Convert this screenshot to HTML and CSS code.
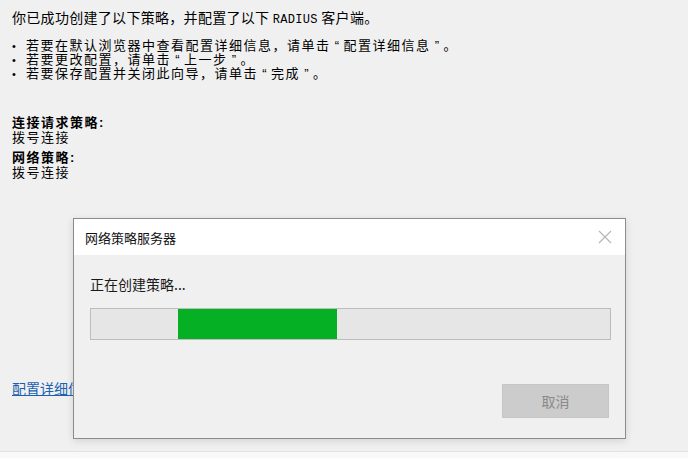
FILE: index.html
```html
<!DOCTYPE html>
<html lang="zh-CN">
<head>
  <meta charset="UTF-8">
  <title>新建 RADIUS 客户端和策略</title>
  <link rel="stylesheet" href="styles.css">
</head>
<body>
  <div class="page">
    <p class="intro">你已成功创建了以下策略，并配置了以下 <span class="mono">RADIUS</span> 客户端。</p>
    <ul class="tips">
      <li>若要在默认浏览器中查看配置详细信息，请单击<span class="q">“</span>配置详细信息<span class="q">”</span>。</li>
      <li>若要更改配置，请单击<span class="q">“</span>上一步<span class="q">”</span>。</li>
      <li>若要保存配置并关闭此向导，请单击<span class="q">“</span>完成<span class="q">”</span>。</li>
    </ul>

    <div class="policy">
      <div class="policy-label">连接请求策略:</div>
      <div class="policy-value">拨号连接</div>
    </div>
    <div class="policy">
      <div class="policy-label">网络策略:</div>
      <div class="policy-value">拨号连接</div>
    </div>

    <a class="details-link" href="#">配置详细信息</a>
  </div>
  <div class="footer"></div>

  <div class="dialog">
    <div class="dialog-title">
      <span>网络策略服务器</span>
      <svg class="close" width="14" height="14" viewBox="0 0 14 14">
        <path d="M1 1 L13 13 M13 1 L1 13" stroke="#b4b4b4" stroke-width="1.1" fill="none"/>
      </svg>
    </div>
    <div class="dialog-body">
      <div class="status">正在创建策略...</div>
      <div class="progress">
        <div class="progress-chunk"></div>
      </div>
      <div class="actions">
        <button class="btn-cancel" disabled>取消</button>
      </div>
    </div>
  </div>
</body>
</html>
```

FILE: styles.css
```css
body {
  margin: 0;
  font-family: "Noto Sans CJK SC", "Liberation Sans", sans-serif;
  background-color: #f0f0f0;
  color: #000000;
  position: relative;
  height: 458px;
  overflow: hidden;
}

.page {
  height: 443px;
  padding: 8px 12px 0 12px;
  font-size: 14px;
}

.intro {
  margin: 0;
  line-height: 18px;
  letter-spacing: 0.3px;
}

.mono {
  font-family: "Liberation Mono", monospace;
  font-size: 12px;
}

/* tightly packed lines, like the wizard's bitmap font */
.tips,
.policy {
  font-family: "Liberation Sans", "Noto Sans CJK SC", sans-serif;
  font-size: 13px;
  letter-spacing: 1.5px;
}

.tips {
  margin: 10px 0 0 0;
  padding: 0;
  list-style: none;
  line-height: 14px;
}

.tips li::before {
  content: "•";
  display: inline-block;
  width: 14px;
  font-size: 11px;
  text-align: left;
}

.q {
  display: inline-block;
  width: 13px;
  text-align: center;
  letter-spacing: 0;
}

.policy {
  line-height: 15px;
  margin-top: 5px;
}

.tips + .policy {
  margin-top: 34px;
}

.policy-label {
  font-weight: bold;
}

.details-link {
  display: inline-block;
  margin-top: 199px;
  color: #1a62b0;
  text-decoration: underline;
  line-height: 18px;
}

.footer {
  height: 7px;
  border-top: 1px solid #e2e2e2;
  background-color: #f9f9f9;
}

/* modal progress dialog over the wizard page */
.dialog {
  position: absolute;
  left: 73px;
  top: 218px;
  width: 551px;
  height: 219px;
  border: 1px solid #8c8c8c;
  background-color: #f0f0f0;
  box-shadow: 0 2px 8px rgba(0, 0, 0, 0.12);
  display: flex;
  flex-direction: column;
}

.dialog-title {
  height: 36px;
  background-color: #ffffff;
  display: flex;
  align-items: center;
  justify-content: space-between;
  padding: 0 13px 0 11px;
  font-size: 13px;
  color: #111111;
}

.dialog-body {
  flex: 1;
  padding: 20px 14px 0 16px;
}

.status {
  font-size: 14px;
  line-height: 18px;
  color: #1a1a1a;
}

.progress {
  margin-top: 15px;
  height: 30px;
  border: 1px solid #bcbcbc;
  background-color: #e6e6e6;
  display: flex;
}

.progress-chunk {
  margin-left: 87px;
  width: 159px;
  background-color: #06b025;
}

.actions {
  display: flex;
  justify-content: flex-end;
  margin-top: 44px;
  padding-right: 2px;
}

.btn-cancel {
  width: 107px;
  height: 34px;
  border: 1px solid #c6c6c6;
  background-color: #cccccc;
  color: #8a8a8a;
  font-family: "Noto Sans CJK SC", sans-serif;
  font-size: 14px;
}
```
